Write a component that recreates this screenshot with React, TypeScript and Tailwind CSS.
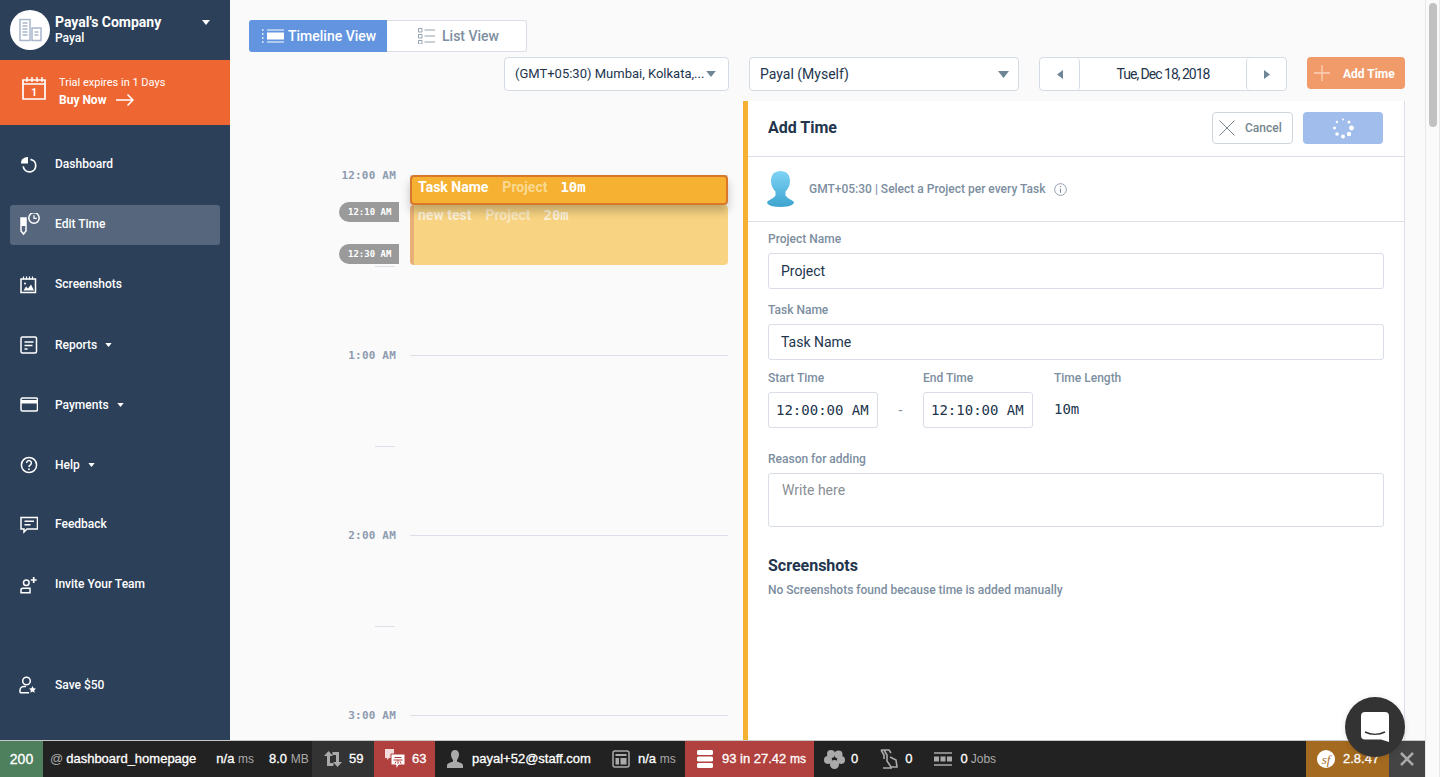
import React from "react";

const Caret = ({ className = "" }: { className?: string }) => (
  <svg viewBox="0 0 8 5" className={className}><path d="M0 0h8L4 5z" fill="currentColor" /></svg>
);

const s = { fill: "none", stroke: "currentColor", strokeWidth: 1.5 };

const icons: Record<string, React.ReactNode> = {
  dash: (
    <svg viewBox="0 0 18 18" className="w-[18px] h-[18px]">
      <path d="M2 3.500A7 7 0 0 1 8 1v6.500H1A7 7 0 0 1 2 3.500z" fill="currentColor" />
      <path d="M10.500 3.300a6.300 6.300 0 1 1-7.300 7" {...s} strokeWidth={1.700} />
    </svg>
  ),
  edit: (
    <svg viewBox="0 0 22 24" className="w-[22px] h-[24px]">
      <path d="M1 5h5v13l-2.500 3-2.500-3z" {...s} strokeWidth={1.500} />
      <path d="M1 5h5v8H1z" fill="currentColor" />
      <circle cx="14" cy="5" r="5.200" {...s} />
      <path d="M14 2.300v3h2.800" {...s} strokeWidth={1.300} />
    </svg>
  ),
  shots: (
    <svg viewBox="0 0 18 18" className="w-[18px] h-[18px]">
      <path d="M1 3h14.500v13.500H1z" {...s} />
      <path d="M3.500 .5v3M6.500 .5v3M9.500 .5v3M12.500 .5v3" {...s} strokeWidth={1.200} />
      <path d="M3.500 14.500l2.500-4 2 2 3-4 3 6z" fill="currentColor" />
      <circle cx="5" cy="7.500" r="1" fill="currentColor" />
    </svg>
  ),
  reports: (
    <svg viewBox="0 0 18 18" className="w-[18px] h-[18px]">
      <rect x="1" y="1" width="15.500" height="16" rx="1.500" {...s} />
      <path d="M4.500 6h9M4.500 9.500h8" {...s} /><path d="M4.500 13h3" {...s} />
    </svg>
  ),
  pay: (
    <svg viewBox="0 0 18 16" className="w-[18px] h-[16px]">
      <rect x="1" y="1" width="16.500" height="13" rx="1.500" {...s} />
      <path d="M1 3h16.500v3.500H1z" fill="currentColor" />
    </svg>
  ),
  help: (
    <svg viewBox="0 0 18 18" className="w-[18px] h-[18px]">
      <circle cx="9" cy="9" r="7.600" {...s} />
      <path d="M6.600 7a2.400 2.400 0 1 1 3.600 2.100c-.8.500-1.200.900-1.200 1.900" {...s} />
      <circle cx="9" cy="13.200" r=".9" fill="currentColor" />
    </svg>
  ),
  feedback: (
    <svg viewBox="0 0 18 18" className="w-[18px] h-[18px]">
      <path d="M1 1.500h16.500v11.500H7l-3 3v-3H1z" {...s} />
      <path d="M4.500 5.300h9.500M4.500 8.800h6" {...s} />
    </svg>
  ),
  invite: (
    <svg viewBox="0 0 18 18" className="w-[18px] h-[18px]">
      <circle cx="6.300" cy="6.800" r="2.800" {...s} />
      <path d="M1 16.800v-3c0-1 .8-1.500 2-1.500h7v4.500z" {...s} />
      <path d="M13.700 1v6M10.700 4h6" {...s} strokeWidth={1.700} />
    </svg>
  ),
  save: (
    <svg viewBox="0 0 18 18" className="w-[18px] h-[18px]">
      <circle cx="7.500" cy="5" r="3.800" {...s} />
      <path d="M1 16.800v-2.600c0-2 1.800-3.600 4-3.600h2M1 16.800h9" {...s} />
      <path d="M13.500 10l1.100 2.300 2.400.3-1.800 1.700.5 2.500-2.200-1.200-2.200 1.200.5-2.500-1.800-1.700 2.400-.3z" fill="currentColor" />
    </svg>
  ),
};

const nav = [
  { key: "dash", label: "Dashboard" },
  { key: "edit", label: "Edit Time", active: true },
  { key: "shots", label: "Screenshots" },
  { key: "reports", label: "Reports", caret: true },
  { key: "pay", label: "Payments", caret: true },
  { key: "help", label: "Help", caret: true },
  { key: "feedback", label: "Feedback" },
  { key: "invite", label: "Invite Your Team" },
];

function Sidebar() {
  return (
    <aside className="w-[230px] shrink-0 bg-[#2c405a] text-white flex flex-col">
      <div className="h-[60px] flex items-start pl-[10px] pt-[10px]">
        <div className="w-[40px] h-[40px] rounded-full bg-white flex items-center justify-center">
          <svg viewBox="0 0 24 24" className="w-[24px] h-[24px] text-[#a9b7cc]">
            <path d="M2 1.500h10v21H2zM14 10h9v12.500h-9z" fill="none" stroke="currentColor" strokeWidth="1.500" />
            <path d="M4.500 5h5M4.500 8h5M4.500 11h5M4.500 14h5M4.500 17h5M16.500 14h4M16.500 17h4" stroke="currentColor" strokeWidth="1.500" />
          </svg>
        </div>
        <div className="ml-[5px] w-[147px]">
          <div className="text-[14px] leading-[16px] mt-[4px] font-bold">Payal's Company</div>
          <div className="text-[12px] leading-[14px] mt-[1px] font-medium">Payal</div>
        </div>
        <Caret className="w-[8px] h-[5px] mt-[10px]" />
      </div>
      <div className="h-[65px] bg-[#ee6732] flex items-start pl-[22px] pt-[15px]">
        <svg viewBox="0 0 24 24" className="w-[24px] h-[26px]">
          <path d="M1 4h22v19H1z" {...s} strokeWidth={1.700} />
          <path d="M1 8h22" {...s} />
          <path d="M5 1v5M10 1v5M15 1v5M20 1v5" {...s} strokeWidth={1.400} />
          <text x="12" y="20" textAnchor="middle" fontSize="10" fontWeight="700" fill="currentColor" fontFamily="Roboto, sans-serif">1</text>
        </svg>
        <div className="ml-[13px]">
          <div className="text-[11px] leading-[14px] font-normal mt-[1px]">Trial expires in 1 Days</div>
          <div className="flex items-center mt-[2px]">
            <span className="text-[12px] leading-[16px] font-bold">Buy Now</span>
            <svg viewBox="0 0 18 12" className="w-[18px] h-[12px] ml-[10px]">
              <path d="M0 6h17M11.500 .5L17 6l-5.500 5.500" {...s} />
            </svg>
          </div>
        </div>
      </div>
      <nav className="flex flex-col gap-[20px] mt-[20px] px-[10px]">
        {nav.map((n) => (
          <div
            key={n.label}
            className={`h-[40px] flex items-center rounded-[3px] pl-[10px] ${n.active ? "bg-[#56677d]" : ""}`}
          >
            <span className="w-[35px] shrink-0 flex items-center">{icons[n.key]}</span>
            <span className={`text-[12px] font-medium ${n.caret ? "" : "mb-[2px]"}`}>{n.label}</span>
            {n.caret && <Caret className="w-[7px] h-[4px] ml-[8px]" />}
          </div>
        ))}
      </nav>
      <div className="mt-[60px] px-[10px]">
        <div className="h-[40px] flex items-center pl-[9px]">
          <span className="w-[36px] shrink-0 flex items-center">{icons.save}</span>
          <span className="text-[12px] font-medium">Save $50</span>
        </div>
      </div>
    </aside>
  );
}

const mono = "font-['DejaVu_Sans_Mono',monospace]";

function HourRow({ label }: { label: string }) {
  return (
    <div className="h-[20px] flex items-center shrink-0">
      <div className={`w-[147px] mt-[2px] text-right text-[11px] tracking-[0.2px] font-bold text-[#8e9cb0] ${mono}`}>{label}</div>
      <div className="ml-[14px] flex-1 h-px bg-[#dcdfe8]" />
    </div>
  );
}
function HalfRow() {
  return (
    <div className="h-[20px] flex items-center shrink-0">
      <div className="w-[147px] flex justify-end pr-[1px] pt-[2px]"><div className="w-[20px] h-px bg-[#dcdfe8]" /></div>
    </div>
  );
}

function Timeline() {
  return (
    <div className="relative w-[479px] shrink-0 flex flex-col gap-[70px] pt-[64px]">
      <HourRow label="12:00 AM" />
      <HalfRow />
      <HourRow label="1:00 AM" />
      <HalfRow />
      <HourRow label="2:00 AM" />
      <HalfRow />
      <HourRow label="3:00 AM" />

      <div className={`absolute left-[90px] top-[101px] w-[60px] h-[20px] rounded-l-full bg-[#9a9a9a] text-white text-[9px] font-bold flex items-center pl-[9px] pt-[1px] ${mono}`}>12:10 AM</div>
      <div className={`absolute left-[90px] top-[143px] w-[60px] h-[20px] rounded-l-full bg-[#9a9a9a] text-white text-[9px] font-bold flex items-center pl-[9px] pt-[1px] ${mono}`}>12:30 AM</div>

      <div className="absolute left-[161px] top-[104px] w-[318px] h-[60px] rounded-[4px] bg-[#f7d382] border-l-[4px] border-[#e8b077] pl-[4px] flex items-start text-[14px] leading-[20px] font-bold text-white/70">
        <span>new test</span>
        <span className="ml-[14px] text-white/50">Project</span>
        <span className={`ml-[13px] ${mono}`}>20m</span>
      </div>
      <div className="absolute left-[161px] top-[74px] w-[318px] h-[30px] rounded-[4px] bg-[#f6b132] border-2 border-[#d9772a] pl-[6px] pb-[5px] flex items-center text-[14px] font-bold text-white shadow-[0_6px_10px_rgba(0,0,0,0.22)]">
        <span>Task Name</span>
        <span className="ml-[14px] text-[#f9d98f]">Project</span>
        <span className={`ml-[13px] ${mono}`}>10m</span>
      </div>
    </div>
  );
}

const labelCls = "text-[12px] leading-[14px] font-medium text-[#7c8ea0]";
const inputCls = "border border-[#d9dde6] rounded-[3px] bg-white flex items-center";

function Spinner() {
  const dots = Array.from({ length: 8 }, (_, i) => {
    const a = (i * Math.PI) / 4 - Math.PI / 2;
    return { x: 11 + 8.500 * Math.cos(a), y: 11 + 8.500 * Math.sin(a), r: [1, 1.500, 2.400, 2.200, 2, 1.800, 1.500, 1.200][i] };
  });
  return (
    <svg viewBox="0 0 22 22" className="w-[22px] h-[22px]">
      {dots.map((d, i) => <circle key={i} cx={d.x} cy={d.y} r={d.r} fill="#fff" />)}
    </svg>
  );
}

function Panel() {
  return (
    <section className="w-[662px] shrink-0 h-[640px] bg-white border-l-[5px] border-[#f6b132] flex flex-col relative">
      <div className="h-[56px] shrink-0 border-b border-[#dcdfe8] flex items-center pl-[20px] pr-[22px]">
        <h2 className="text-[16px] font-bold text-[#22354d] mb-[2px]">Add Time</h2>
        <div className="ml-auto flex gap-[10px] mb-[2px]">
          <div className="w-[81px] h-[32px] border border-[#cfd6dc] rounded-[4px] flex items-center pl-[6px] text-[12px] font-medium text-[#75868f]">
            <svg viewBox="0 0 16 16" className="w-[16px] h-[16px]"><path d="M.5.500l15 15M15.500.500l-15 15" stroke="#75868f" strokeWidth="1" fill="none" /></svg>
            <span className="ml-[10px]">Cancel</span>
          </div>
          <div className="w-[80px] h-[32px] bg-[#a1bdec] rounded-[4px] flex items-center justify-center"><Spinner /></div>
        </div>
      </div>
      <div className="h-[65px] shrink-0 border-b border-[#dcdfe8] flex items-center pl-[19px]">
        <svg viewBox="0 0 27 36" className="w-[27px] h-[36px]">
          <defs>
            <linearGradient id="av" x1="0" y1="0" x2="0" y2="1">
              <stop offset="0" stopColor="#80d4f6" /><stop offset="1" stopColor="#3da4cf" />
            </linearGradient>
          </defs>
          <path d="M13.500 0c6 0 9.500 3.500 9.500 10 0 5-2.500 8.500-4.500 10.500v4c2 3 6 4 8.500 6.500 0 2-3 5-13.500 5S0 33 0 31c2.500-2.500 6.500-3.500 8.500-6.500v-4C6.500 18.500 4 15 4 10 4 3.500 7.500 0 13.500 0z" fill="url(#av)" />
        </svg>
        <span className="ml-[15px] text-[12px] font-medium text-[#7c8ea0]">GMT+05:30 | Select a Project per every Task</span>
        <svg viewBox="0 0 14 14" className="w-[13px] h-[13px] ml-[9px] text-[#7c8ea0]">
          <circle cx="7" cy="7" r="6.300" {...s} strokeWidth={0.9} />
          <path d="M7 6v4.500" {...s} strokeWidth={1.100} /><circle cx="7" cy="3.900" r=".8" fill="currentColor" />
        </svg>
      </div>
      <div className="pl-[20px] pr-[21px] pt-[10px]">
        <div className={labelCls}>Project Name</div>
        <div className={`${inputCls} h-[36px] mt-[7px] pl-[12px] text-[14px] text-[#22354d]`}>Project</div>
        <div className={`${labelCls} mt-[14px]`}>Task Name</div>
        <div className={`${inputCls} h-[36px] mt-[7px] pl-[12px] text-[14px] text-[#22354d]`}>Task Name</div>
        <div className="flex mt-[11px]">
          <div className="w-[110px]">
            <div className={labelCls}>Start Time</div>
            <div className={`${inputCls} h-[36px] mt-[7px] pl-[7px] text-[14px] text-[#22354d] ${mono}`}>12:00:00 AM</div>
          </div>
          <div className="w-[45px] pt-[21px] text-center text-[14px] leading-[36px] text-[#7c8ea0]">-</div>
          <div className="w-[110px]">
            <div className={labelCls}>End Time</div>
            <div className={`${inputCls} h-[36px] mt-[7px] pl-[7px] text-[14px] text-[#22354d] ${mono}`}>12:10:00 AM</div>
          </div>
          <div className="ml-[21px]">
            <div className={labelCls}>Time Length</div>
            <div className={`mt-[15px] text-[14px] leading-[18px] text-[#22354d] ${mono}`}>10m</div>
          </div>
        </div>
        <div className={`${labelCls} mt-[24px]`}>Reason for adding</div>
        <div className="h-[54px] mt-[7px] border border-[#d9dde6] rounded-[3px] pl-[13px] pt-[8px] text-[14px] leading-[16px] text-[#8a8f94]">Write here</div>
        <h3 className="mt-[29px] text-[16px] leading-[20px] font-bold text-[#22354d]">Screenshots</h3>
        <p className="mt-[7px] text-[12px] leading-[14px] font-medium text-[#7c8ea0]">No Screenshots found because time is added manually</p>
      </div>
      <div className="absolute right-0 top-0 bottom-0 w-px bg-[#dcdfe8]" />
    </section>
  );
}

function Select({ w, text, size = "text-[14px]", extra = "pr-[9px]", caret = "w-[11px] h-[7px]" }: { w: string; text: string; size?: string; extra?: string; caret?: string }) {
  return (
    <div className={`${w} h-[34px] bg-white border border-[#d5dbe2] rounded-[4px] flex items-center pl-[10px] ${extra} ${size} text-[#22354d]`}>
      <span className="flex-1 whitespace-nowrap">{text}</span>
      <Caret className={`${caret} text-[#6f8696] shrink-0`} />
    </div>
  );
}

function Content() {
  return (
    <main className="flex-1 min-w-0 bg-[#fafafa] flex flex-col pt-[20px] pl-[19px] pr-[20px] overflow-hidden">
      <div className="flex h-[32px] w-[278px] text-[14px] font-medium">
        <div className="w-[138px] bg-[#6294e0] text-white rounded-l-[3px] flex items-center pl-[13px]">
          <svg viewBox="0 0 22 14" className="w-[22px] h-[14px]">
            <path d="M0 1h1.500M0 5h1.500M0 9h1.500M0 13h1.500" stroke="#fff" strokeWidth="1.500" />
            <path d="M5 1h17M5 13h17" stroke="#fff" strokeWidth="1" />
            <path d="M5 3.500h17v7H5z" fill="#fff" />
          </svg>
          <span className="ml-[4px]">Timeline View</span>
        </div>
        <div className="flex-1 bg-white border border-l-0 border-[#dcdfe8] rounded-r-[3px] text-[#7c8ea0] flex items-center pl-[31px]">
          <svg viewBox="0 0 17 16" className="w-[17px] h-[16px]">
            <path d="M.500.500h3.500v3.500H.500zM.500 6.500h3.500V10H.500zM.500 12.500h3.500V16H.500z" fill="none" stroke="#93a1af" strokeWidth="1" />
            <path d="M6.500 2h10.500M6.500 8h10.500M6.500 14h10.500" stroke="#93a1af" strokeWidth="1.200" />
          </svg>
          <span className="ml-[7px]">List View</span>
        </div>
      </div>
      <div className="flex justify-end gap-[20px] mt-[5px] items-start shrink-0">
        <Select w="w-[225px]" text="(GMT+05:30) Mumbai, Kolkata,..." size="text-[13px]" extra="pr-[12px]" caret="w-[10px] h-[6px]" />
        <Select w="w-[270px]" text="Payal (Myself)" />
        <div className="w-[248px] h-[34px] bg-white border border-[#d5dbe2] rounded-[4px] flex items-center text-[14px] text-[#22354d] tracking-[-1px]">
          <div className="w-[40px] h-full border-r border-[#d5dbe2] rounded-[4px] flex items-center justify-center">
            <svg viewBox="0 0 6 9" className="w-[6px] h-[9px]"><path d="M6 0v9L0 4.500z" fill="#6f8696" /></svg>
          </div>
          <div className="flex-1 text-center">Tue, Dec 18, 2018</div>
          <div className="w-[40px] h-full border-l border-[#d5dbe2] rounded-[4px] flex items-center justify-center">
            <svg viewBox="0 0 6 9" className="w-[6px] h-[9px]"><path d="M0 0v9l6-4.500z" fill="#6f8696" /></svg>
          </div>
        </div>
        <div className="w-[98px] h-[32px] bg-[#f19b6a] rounded-[4px] flex items-center pl-[7px] text-[12px] font-bold text-white">
          <svg viewBox="0 0 16 16" className="w-[16px] h-[16px]"><path d="M8 0v16M0 8h16" stroke="#fbd3bb" strokeWidth="1.300" /></svg>
          <span className="ml-[13px] mt-[2px]">Add Time</span>
        </div>
      </div>
      <div className="flex gap-[15px] mt-[10px] flex-1 min-h-0">
        <Timeline />
        <Panel />
      </div>
    </main>
  );
}

const sans = "font-['Liberation_Sans',sans-serif]";
const stroke = "[-webkit-text-stroke:0.3px_white]";
const Dim = ({ children }: { children: React.ReactNode }) => <span className="text-[#aaa] text-[12px] [-webkit-text-stroke:0]">{children}</span>;

function Toolbar() {
  return (
    <footer className={`h-[36px] shrink-0 bg-[#222] text-white flex items-stretch text-[13px] whitespace-nowrap ${stroke} shadow-[0_-1px_0_#c8c8c8] relative ${sans}`}>
      <div className="w-[43px] bg-[#4f805d] flex items-center justify-center text-[14px]">200</div>
      <div className="w-[269px] flex items-center pl-[7px]">
        <span className="text-[#aaa] text-[13px] [-webkit-text-stroke:0]">@</span>
        <span className="ml-[3px]">dashboard_homepage</span>
        <span className="ml-[20px]">n/a <Dim>ms</Dim></span>
        <span className="ml-[15px]">8.0 <Dim>MB</Dim></span>
      </div>
      <div className="w-[62px] bg-[#333] flex items-center pl-[12px]">
        <svg viewBox="0 0 18 20" className="w-[18px] h-[20px]">
          <path d="M4.500 6v9.500h5" fill="none" stroke="#aaa" strokeWidth="3" />
          <path d="M0 7l4.500-5L9 7zM9 13l4.500 5 4.500-5z" fill="#aaa" />
          <path d="M13.500 14V4.500h-5" fill="none" stroke="#aaa" strokeWidth="3" />
        </svg>
        <span className="ml-[7px]">59</span>
      </div>
      <div className="w-[61px] bg-[#b0413e] flex items-center pl-[10px]">
        <svg viewBox="0 0 22 21" className="w-[22px] h-[21px]">
          <path d="M1 0h9v9H5l-2 2V9H1z" fill="#f3dcdb" />
          <path d="M7 5h14v11h-6l-3 4v-4H7z" fill="#fff" stroke="#b0413e" />
          <path d="M10.500 8.500h7M9.500 11h9M14 11v4M12 12.500l-1 2M16 12.500l1 2" stroke="#b0413e" strokeWidth="1" fill="none" />
        </svg>
        <span className="ml-[6px]">63</span>
      </div>
      <div className="w-[250px] flex items-center pl-[12px]">
        <svg viewBox="0 0 16 18" className="w-[16px] h-[18px]"><path d="M8 0c2.500 0 4 2 4 4.500S10.500 9.500 10 10v1.500c2 1 6 1.500 6 4V18H0v-2.500c0-2.500 4-3 6-4V10c-.5-.5-2-3-2-5.500S5.500 0 8 0z" fill="#aaa" /></svg>
        <span className="ml-[9px] w-[140px]">payal+52@staff.com</span>
        <svg viewBox="0 0 18 18" className="w-[18px] h-[18px]"><rect x="1" y="1" width="16" height="16" rx="2" fill="none" stroke="#aaa" strokeWidth="1.500" /><path d="M3.500 4h11v2h-11zM3.500 8h3.500v6.500H3.500zM8.500 8h6v6.500h-6z" fill="#aaa" /></svg>
        <span className="ml-[8px]">n/a <Dim>ms</Dim></span>
      </div>
      <div className="w-[129px] bg-[#b0413e] flex items-center pl-[12px]">
        <svg viewBox="0 0 16 18" className="w-[16px] h-[18px]"><path d="M2 0h12a2 2 0 0 1 0 5H2a2 2 0 0 1 0-5zM2 6.500h12a2 2 0 0 1 0 5H2a2 2 0 0 1 0-5zM2 13h12a2 2 0 0 1 0 5H2a2 2 0 0 1 0-5z" fill="#fff" /></svg>
        <span className="ml-[9px]">93 in 27.42 <span className="text-[12px]">ms</span></span>
      </div>
      <div className="flex items-center pl-[10px]">
        <svg viewBox="0 0 21 20" className="w-[21px] h-[20px]"><circle cx="7" cy="5" r="4" fill="#aaa" /><circle cx="14.500" cy="5.500" r="4" fill="#aaa" /><circle cx="4" cy="11" r="4" fill="#aaa" /><circle cx="17" cy="11" r="4" fill="#aaa" /><circle cx="10.500" cy="15.500" r="4.500" fill="#aaa" /></svg>
        <span className="ml-[6px]">0</span>
        <svg viewBox="0 0 18 20" className="w-[18px] h-[20px] ml-[22px]"><path d="M1 1h8l2 3M4 1l3 5v6l4 6h6l-1-7-6-3M1 1l3 5v4M3 19h9" fill="none" stroke="#aaa" strokeWidth="1.600" /></svg>
        <span className="ml-[7px]">0</span>
        <svg viewBox="0 0 18 14" className="w-[18px] h-[14px] ml-[22px]"><path d="M0 1h18M0 13h18" stroke="#aaa" strokeWidth="1.500" /><path d="M0 4.500h5v5H0zM6.500 4.500h5v5h-5zM13 4.500h5v5h-5z" fill="#aaa" /></svg>
        <span className="ml-[8px]">0</span>
        <span className="ml-[3px]"><Dim>Jobs</Dim></span>
      </div>
      <div className="ml-auto w-[83px] bg-[#a46a1f] flex items-center pl-[11px]">
        <div className="w-[18px] h-[18px] rounded-full bg-white text-[#a46a1f] flex items-center justify-center text-[13px] italic font-['Liberation_Serif',serif] leading-none [-webkit-text-stroke:0]">sf</div>
        <span className="ml-[8px]">2.8.47</span>
      </div>
      <div className="w-[36px] bg-[#444] flex items-center justify-center">
        <svg viewBox="0 0 14 14" className="w-[14px] h-[14px]"><path d="M1 1l12 12M13 1L1 13" stroke="#aaa" strokeWidth="2.500" /></svg>
      </div>
    </footer>
  );
}

export default function App() {
  return (
    <div className="relative w-[1440px] h-[777px] overflow-hidden flex font-['Roboto',sans-serif] antialiased">
      <div className="w-[1425px] h-full flex flex-col">
        <div className="flex-1 min-h-0 flex">
          <Sidebar />
          <Content />
        </div>
        <Toolbar />
      </div>
      <div className="w-[15px] h-full bg-[#fafafa] border-x border-[#e8e8e8] pl-[3px] pt-[3px] shrink-0">
        <div className="w-[8px] h-[124px] rounded-full bg-[#c1c1c1]" />
      </div>
      <div className="absolute left-[1345px] top-[697px] w-[60px] h-[60px] rounded-full bg-[#333] flex items-center justify-center shadow-[0_1px_6px_rgba(0,0,0,0.1)]">
        <svg viewBox="0 0 28 30" className="w-[28px] h-[30px]">
          <path d="M4 0h20a4 4 0 0 1 4 4v26l-8-2.500H4a4 4 0 0 1-4-4V4a4 4 0 0 1 4-4z" fill="#fff" />
          <path d="M4 20c6 3 14 3 20 0" fill="none" stroke="#333" strokeWidth="1.500" />
        </svg>
      </div>
    </div>
  );
}
